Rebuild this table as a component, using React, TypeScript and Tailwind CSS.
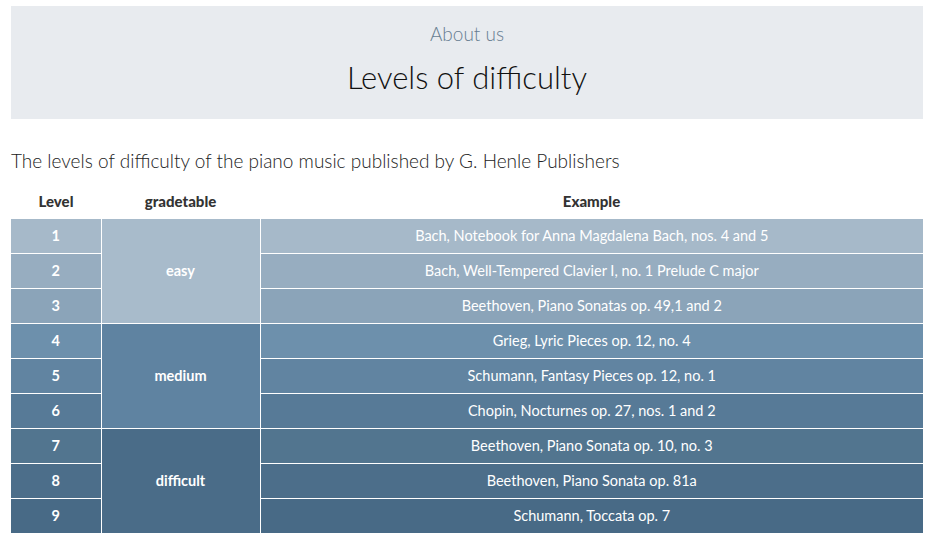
const rows = [
  { level: 1, example: "Bach, Notebook for Anna Magdalena Bach, nos. 4 and 5", bg: "bg-[#a6b9c9]" },
  { level: 2, example: "Bach, Well-Tempered Clavier I, no. 1 Prelude C major", bg: "bg-[#97adc0]" },
  { level: 3, example: "Beethoven, Piano Sonatas op. 49,1 and 2", bg: "bg-[#8ba4b9]" },
  { level: 4, example: "Grieg, Lyric Pieces op. 12, no. 4", bg: "bg-[#6d90ac]" },
  { level: 5, example: "Schumann, Fantasy Pieces op. 12, no. 1", bg: "bg-[#6184a1]" },
  { level: 6, example: "Chopin, Nocturnes op. 27, nos. 1 and 2", bg: "bg-[#577a97]" },
  { level: 7, example: "Beethoven, Piano Sonata op. 10, no. 3", bg: "bg-[#52758f]" },
  { level: 8, example: "Beethoven, Piano Sonata op. 81a", bg: "bg-[#4c6e8a]" },
  { level: 9, example: "Schumann, Toccata op. 7", bg: "bg-[#486a86]" },
];

const grades: Record<number, { label: string; bg: string }> = {
  1: { label: "easy", bg: "bg-[#a8bbcb]" },
  4: { label: "medium", bg: "bg-[#5f83a1]" },
  7: { label: "difficult", bg: "bg-[#4a6c88]" },
};

export default function App() {
  return (
    <div className="min-h-screen bg-white px-[11px] pt-[6px] font-['Lato','Open_Sans',sans-serif] text-[#222]">
      {/* Banner */}
      <header className="bg-[#e8ebef] h-[113px] flex flex-col items-center pt-[18px]">
        <p className="text-[19px] leading-[20px] font-light text-[#667d91]">About us</p>
        <h1 className="mt-[16px] text-[31px] leading-[34px] font-light text-[#111]">
          Levels of difficulty
        </h1>
      </header>

      <p className="mt-[30px] text-[19px] leading-[24px] font-light text-[#222]">
        The levels of difficulty of the piano music published by G. Henle Publishers
      </p>

      <table className="mt-[11px] w-full border-collapse text-[14.5px] text-white">
        <thead>
          <tr className="h-[34px] text-[#333] text-[15px]">
            <th className="w-[90px] font-black">Level</th>
            <th className="w-[159px] font-black">gradetable</th>
            <th className="font-black">Example</th>
          </tr>
        </thead>
        <tbody>
          {rows.map((r) => (
            <tr key={r.level} className="h-[35px]">
              <td className={`${r.bg} border border-white border-l-0 text-center font-bold`}>{r.level}</td>
              {grades[r.level] && (
                <td
                  rowSpan={3}
                  className={`${grades[r.level].bg} border border-white text-center font-bold`}
                >
                  {grades[r.level].label}
                </td>
              )}
              <td className={`${r.bg} border border-white border-r-0 text-center`}>{r.example}</td>
            </tr>
          ))}
        </tbody>
      </table>
    </div>
  );
}
